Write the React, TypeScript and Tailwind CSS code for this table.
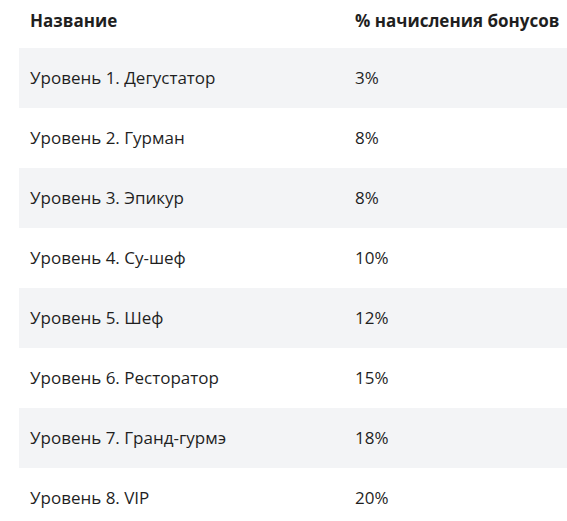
const LEVELS = [
  { name: "Уровень 1. Дегустатор", percent: "3%" },
  { name: "Уровень 2. Гурман", percent: "8%" },
  { name: "Уровень 3. Эпикур", percent: "8%" },
  { name: "Уровень 4. Су-шеф", percent: "10%" },
  { name: "Уровень 5. Шеф", percent: "12%" },
  { name: "Уровень 6. Ресторатор", percent: "15%" },
  { name: "Уровень 7. Гранд-гурмэ", percent: "18%" },
  { name: "Уровень 8. VIP", percent: "20%" },
];

export default function App() {
  return (
    <div className="h-[521px] overflow-hidden bg-white pl-[19px] font-['Open_Sans',sans-serif] text-[17px] text-[#1f1f1f]">
      <table className="w-[548px] border-collapse">
        <thead>
          <tr className="h-[48px]">
            <th className="w-[325px] pb-[6px] pl-[11px] text-left align-middle font-bold">Название</th>
            <th className="pb-[6px] pl-[11px] text-left align-middle font-bold">% начисления бонусов</th>
          </tr>
        </thead>
        <tbody>
          {LEVELS.map((lvl, idx) => (
            <tr key={lvl.name} className={`h-[60px] ${idx % 2 === 0 ? "bg-[#f3f4f6]" : "bg-white"}`}>
              <td className="pl-[11px] align-middle">{lvl.name}</td>
              <td className="pl-[11px] align-middle">{lvl.percent}</td>
            </tr>
          ))}
        </tbody>
      </table>
    </div>
  );
}
